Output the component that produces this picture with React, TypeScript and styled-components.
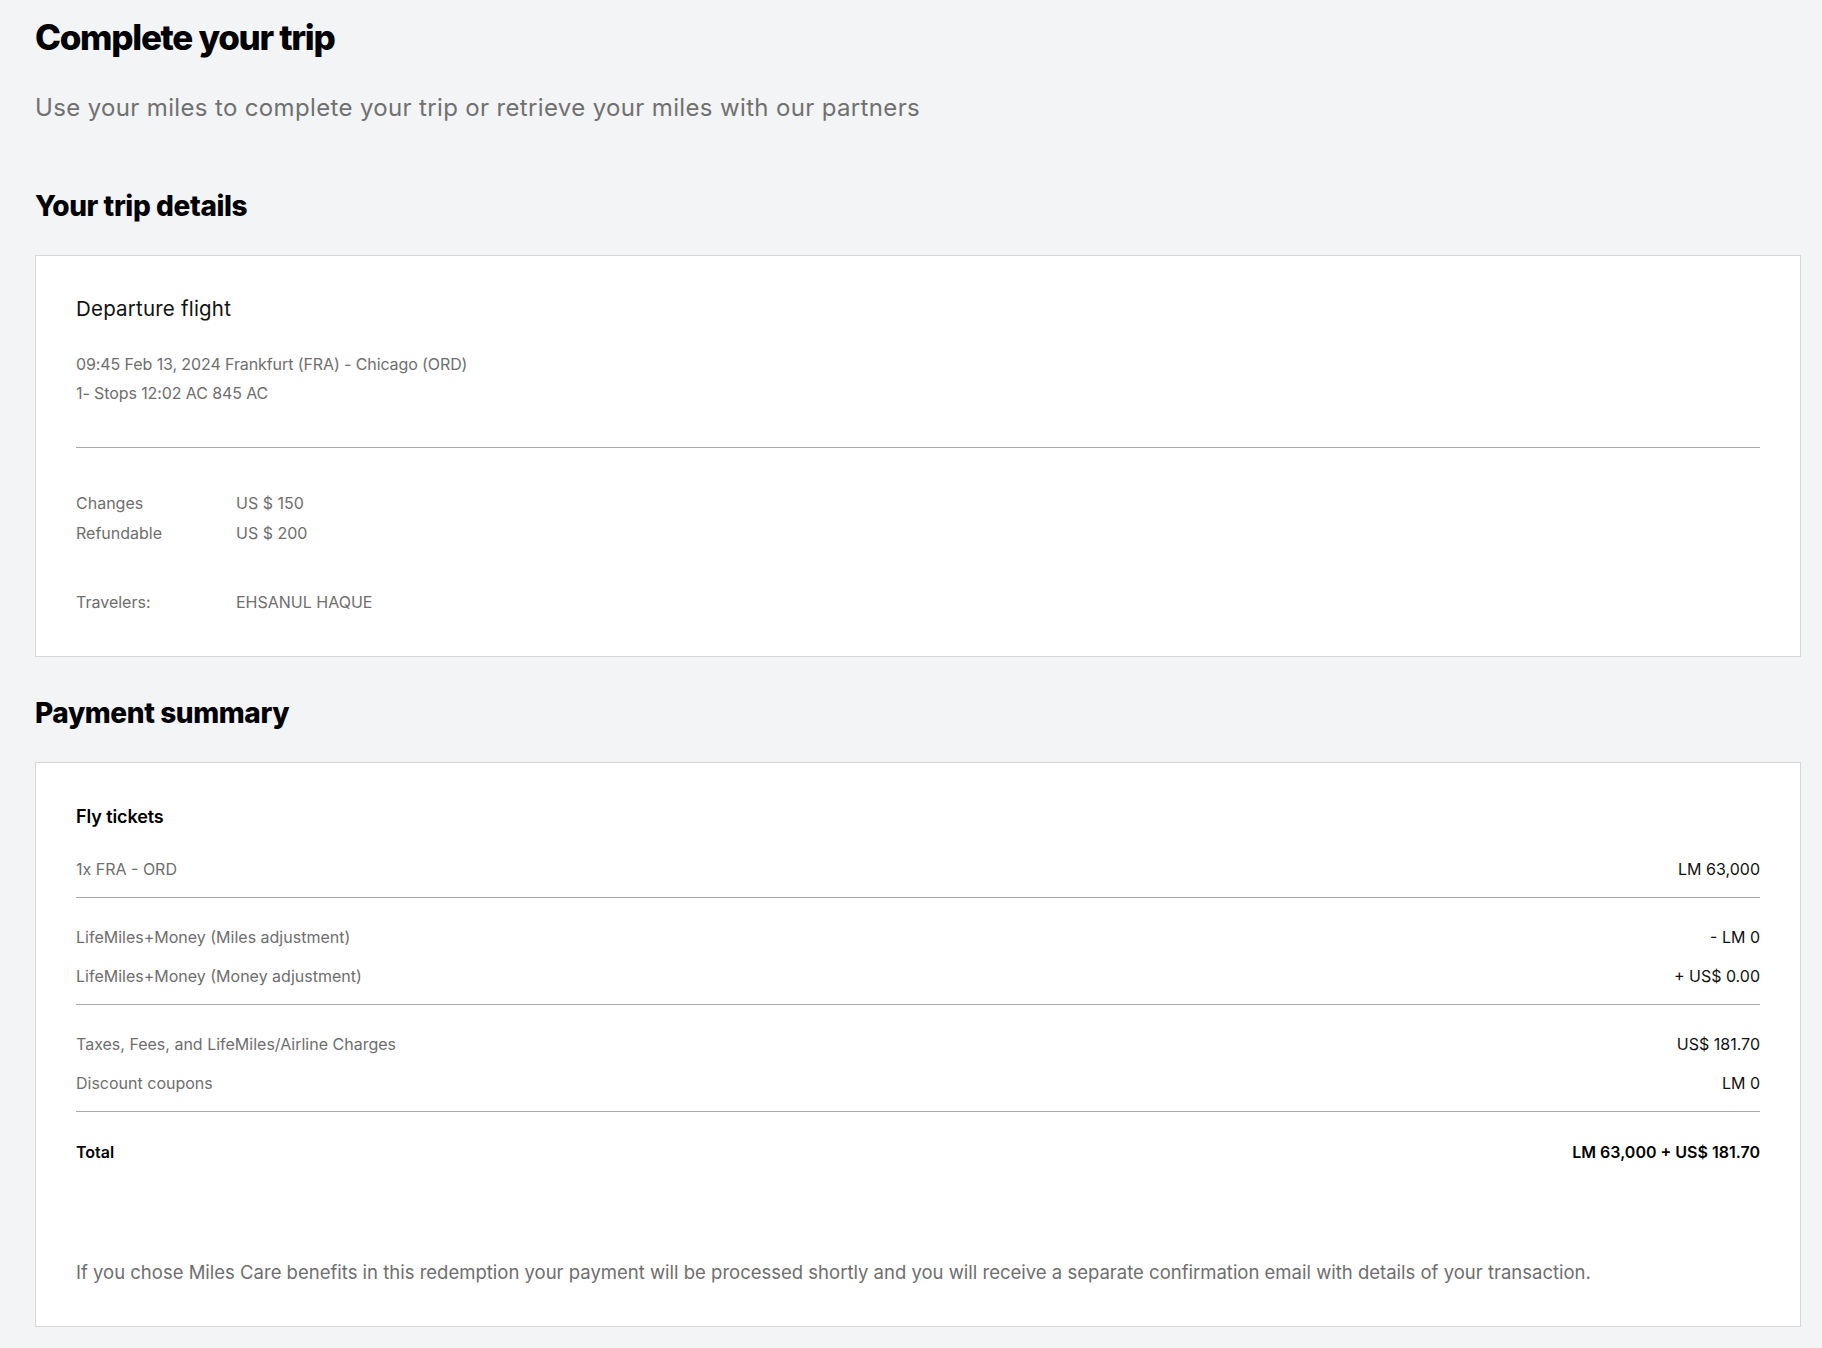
import React from "react";
import styled, { createGlobalStyle } from "styled-components";

const GlobalStyle = createGlobalStyle`
    html, body {
        margin: 0;
        padding: 0;
        background: #f3f4f6;
    }
    body {
        font-family: Inter, "Liberation Sans", Arial, sans-serif;
        color: #111;
    }
`

const trip = {
    title: "Departure flight",
    lines: [
        "09:45 Feb 13, 2024 Frankfurt (FRA) - Chicago (ORD)",
        "1- Stops 12:02 AC 845 AC",
    ],
    fares: [
        { label: "Changes", value: "US $ 150" },
        { label: "Refundable", value: "US $ 200" },
    ],
    travelers: "EHSANUL HAQUE",
};

const payment = [
    [{ label: "1x FRA - ORD", value: "LM 63,000" }],
    [
        { label: "LifeMiles+Money (Miles adjustment)", value: "- LM 0" },
        { label: "LifeMiles+Money (Money adjustment)", value: "+ US$ 0.00" },
    ],
    [
        { label: "Taxes, Fees, and LifeMiles/Airline Charges", value: "US$ 181.70" },
        { label: "Discount coupons", value: "LM 0" },
    ],
];

const App = () => {
    return (
        <>
            <GlobalStyle />
            <Page>
                <Title>Complete your trip</Title>
                <Subtitle>Use your miles to complete your trip or retrieve your miles with our partners</Subtitle>

                <SectionTitle>Your trip details</SectionTitle>
                <Card>
                    <FlightTitle>{trip.title}</FlightTitle>
                    <FlightInfo>
                        {trip.lines.map((line) => (
                            <InfoLine key={line}>{line}</InfoLine>
                        ))}
                    </FlightInfo>
                    <Divider />
                    <FareTable>
                        {trip.fares.map((f) => (
                            <FareRow key={f.label}>
                                <span>{f.label}</span>
                                <span>{f.value}</span>
                            </FareRow>
                        ))}
                    </FareTable>
                    <FareRow $spaced>
                        <span>Travelers:</span>
                        <span>{trip.travelers}</span>
                    </FareRow>
                </Card>

                <SectionTitle>Payment summary</SectionTitle>
                <Card $summary>
                    <GroupTitle>Fly tickets</GroupTitle>
                    {payment.map((group, i) => (
                        <Group key={i}>
                            {group.map((row) => (
                                <Row key={row.label}>
                                    <RowLabel>{row.label}</RowLabel>
                                    <RowValue>{row.value}</RowValue>
                                </Row>
                            ))}
                        </Group>
                    ))}
                    <TotalRow>
                        <span>Total</span>
                        <span>LM 63,000 + US$ 181.70</span>
                    </TotalRow>
                    <Note>
                        If you chose Miles Care benefits in this redemption your payment will be processed shortly and you will receive a separate confirmation email with details of your transaction.
                    </Note>
                </Card>
            </Page>
        </>
    );
};

export default App;

// stylesheet

const Page = styled.div`
    padding: 16px 21px 22px 35px;
    display: flex;
    flex-direction: column;
`

const Title = styled.h1`
    margin: 0;
    font-size: 35px;
    line-height: 42px;
    font-weight: 800;
    letter-spacing: -1.3px;
    color: #000;
`

const Subtitle = styled.p`
    margin: 34px 0 0;
    font-size: 24px;
    line-height: 32px;
    color: #707070;
    letter-spacing: 0.35px;
`

const SectionTitle = styled.h2`
    margin: 67px 0 34px;
    font-size: 28px;
    line-height: 30px;
    font-weight: 800;
    letter-spacing: -0.4px;
    color: #000;

    & ~ & {
        margin-top: 41px;
    }
`

const Card = styled.section<{ $summary?: boolean }>`
    background: #fff;
    border: 1px solid #d6d6d6;
    padding: ${(p) => (p.$summary ? "41px 40px 40px" : "42px 40px 39px")};
`

const FlightTitle = styled.h3`
    margin: 0;
    font-size: 20.5px;
    line-height: 22px;
    font-weight: 400;
    letter-spacing: 0.2px;
    color: #111;
`

const FlightInfo = styled.div`
    margin-top: 30px;
    display: flex;
    flex-direction: column;
`

const InfoLine = styled.span`
    font-size: 16px;
    line-height: 29px;
    letter-spacing: -0.1px;
    color: #6e6e6e;
`

const Divider = styled.hr`
    margin: 39px 0 40px;
    border: none;
    border-top: 1px solid #a7a7aa;
`

const FareTable = styled.div`
    display: flex;
    flex-direction: column;
`

const FareRow = styled.div<{ $spaced?: boolean }>`
    display: grid;
    grid-template-columns: 160px 1fr;
    font-size: 16px;
    line-height: 30px;
    color: #6e6e6e;
    margin-top: ${(p) => (p.$spaced ? "39px" : "0")};
`

const GroupTitle = styled.h4`
    margin: 0;
    font-size: 18px;
    line-height: 26px;
    font-weight: 600;
    letter-spacing: -0.1px;
    color: #000;
`

const Group = styled.div`
    padding: 20px 0 8px;
    border-bottom: 1px solid #a7a7aa;
`

const Row = styled.div`
    display: flex;
    justify-content: space-between;
    align-items: center;
    padding: 8px 0;
    font-size: 16px;
    line-height: 23px;
`

const RowLabel = styled.span`
    color: #6e6e6e;
`

const RowValue = styled.span`
    color: #111;
`

const TotalRow = styled(Row)`
    margin-top: 21px;
    font-weight: 600;
    color: #000;
`

const Note = styled.p`
    margin: 86px 0 0;
    font-size: 18.5px;
    line-height: 28px;
    color: #6e6e6e;
`
